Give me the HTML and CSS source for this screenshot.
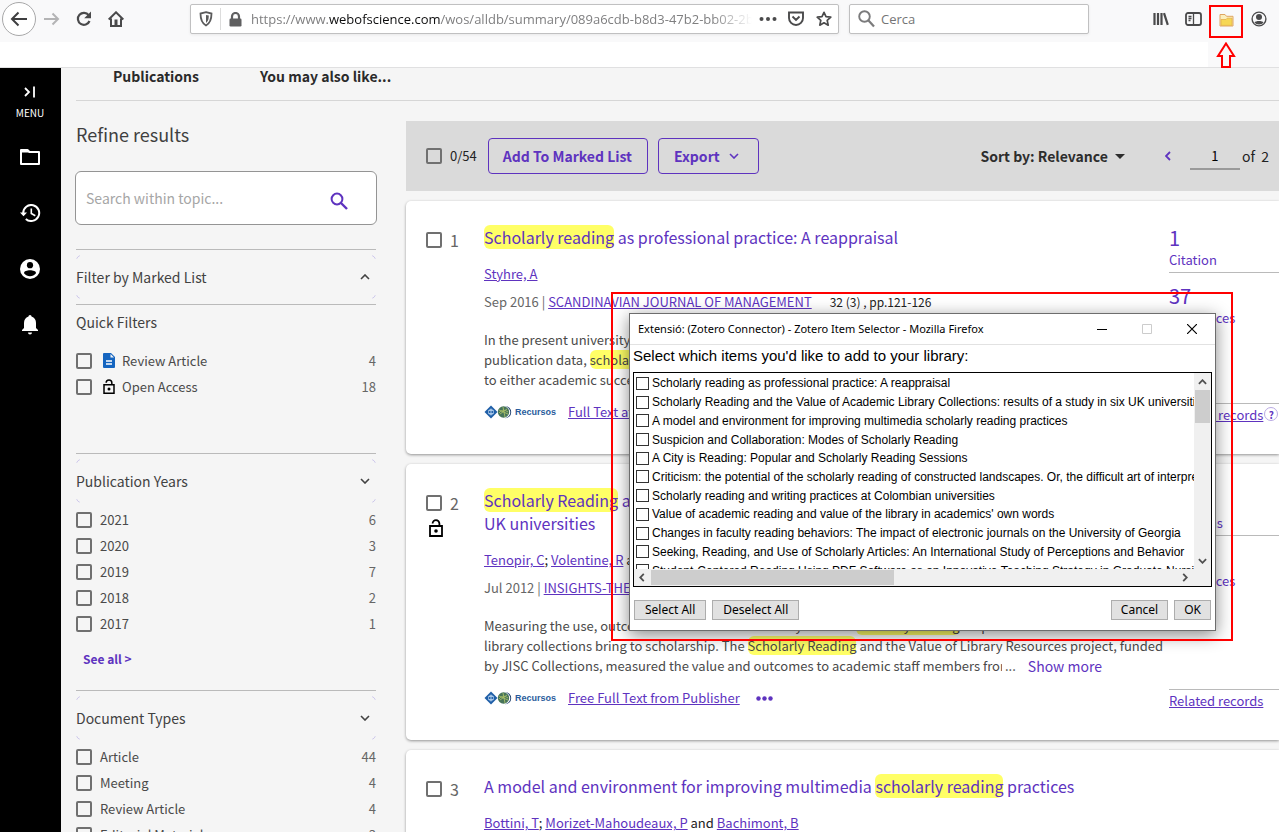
FILE: index.html
```html
<!DOCTYPE html>
<html lang="en">
<head>
<meta charset="utf-8">
<title>Web of Science</title>
<link rel="stylesheet" href="styles.css">
</head>
<body>
<svg class="defs" aria-hidden="true">
  <symbol id="chev-down" viewBox="0 0 10 6"><path d="M1 1l4 4 4-4" fill="none" stroke="currentColor" stroke-width="1.6"/></symbol>
  <symbol id="chev-up" viewBox="0 0 10 6"><path d="M1 5l4-4 4 4" fill="none" stroke="currentColor" stroke-width="1.6"/></symbol>
  <symbol id="unlock" viewBox="0 0 14 18"><path d="M1 7h12v10H1zM3.6 4.500a3.400 3.400 0 0 1 6.800 0V7" fill="none" stroke="currentColor" stroke-width="1.8"/><circle cx="7" cy="12" r="1.8" fill="currentColor"/></symbol>
  <symbol id="recursos" viewBox="0 0 28 14"><path d="M7 .5L13.500 7 7 13.500.5 7z" fill="#1f5fa8"/><path d="M7 3.500v7M4.500 5.500h5M4.500 8.500h5" stroke="#a9c8e8" fill="none"/><circle cx="7" cy="7" r="2.600" stroke="#a9c8e8" fill="none" stroke-width=".8"/><path d="M21 1a6.200 6.200 0 0 1 0 12.400c7-2.400 7-10 0-12.400z" fill="#1d3f6e"/><circle cx="19.500" cy="7" r="5.700" fill="#47745a"/><path d="M15 5l9 4M16 9l7-5M19 2l2 10M15 8c3-4 6-3 9-1" stroke="#a9bf68" fill="none" stroke-width=".9"/></symbol>
</svg>

<header class="chrome">
  <div class="toolbar">
    <button class="icon-btn back" aria-label="Back"><svg width="18" height="16" viewBox="0 0 18 16"><path d="M17 8H2M8.500 1.500L2 8l6.500 6.500" fill="none" stroke="#3f3f40" stroke-width="2"/></svg></button>
    <button class="icon-btn" aria-label="Forward"><svg width="16" height="14" viewBox="0 0 16 14"><path d="M0 7h14M8.500 1.500L14 7l-5.500 5.500" fill="none" stroke="#b4b4b5" stroke-width="2"/></svg></button>
    <button class="icon-btn" aria-label="Reload"><svg width="16" height="16" viewBox="0 0 16 16"><path d="M12.700 4.200A6 6 0 1 0 13.500 10" fill="none" stroke="#4a4a4b" stroke-width="2.200"/><path d="M15 .5v6.800H8.200z" fill="#4a4a4b"/></svg></button>
    <button class="icon-btn" aria-label="Home"><svg width="16" height="16" viewBox="0 0 16 16"><path d="M.7 8.500L8 1.300l7.300 7.200M3 7.500v7.500h10V7.500" fill="none" stroke="#4a4a4b" stroke-width="2"/><path d="M6.500 8.500h3V15h-3z" fill="#4a4a4b"/></svg></button>
    <div class="url-box">
      <svg width="14" height="16" viewBox="0 0 14 16"><path d="M7 1.200l5.500 1.300c0 6-1 9.500-5.500 12C2.500 12 1.500 8.500 1.500 2.500z" fill="none" stroke="#5b5b5c" stroke-width="1.800"/><path d="M7 4l2.800.6c0 3.600-.7 5.600-2.800 7.400z" fill="#5b5b5c"/></svg>
      <span class="url-sep"></span>
      <svg width="13" height="15" viewBox="0 0 13 15"><rect x=".5" y="6.500" width="12" height="8" rx="1.200" fill="#5f5f60"/><path d="M3 7V4.500a3.500 3.500 0 0 1 7 0V7" fill="none" stroke="#5f5f60" stroke-width="2.200"/></svg>
      <div class="url" role="textbox" aria-label="Address">https://www.<b>webofscience.com</b>/wos/alldb/summary/089a6cdb-b8d3-47b2-bb02-2b</div>
      <svg class="dots" width="18" height="4" viewBox="0 0 18 4"><g fill="#4a4a4b"><circle cx="2.500" cy="2" r="2"/><circle cx="9" cy="2" r="2"/><circle cx="15.500" cy="2" r="2"/></g></svg>
      <svg width="16" height="16" viewBox="0 0 16 16"><path d="M1 1.500h14V7a7 7 0 0 1-14 0zM4.500 5.500L8 9l3.500-3.500" fill="none" stroke="#4a4a4b" stroke-width="1.900"/></svg>
      <svg width="16" height="16" viewBox="0 0 16 16"><path d="M8 1.300l2 4.400 4.800.5-3.600 3.200 1 4.800L8 11.800l-4.200 2.400 1-4.800L1.200 6.200 6 5.700z" fill="none" stroke="#4a4a4b" stroke-width="1.700" stroke-linejoin="round"/></svg>
    </div>
    <label class="search-box">
      <svg width="17" height="18" viewBox="0 0 17 18"><circle cx="6.500" cy="6.500" r="5.300" fill="none" stroke="#7b7b7c" stroke-width="1.900"/><path d="M10.500 10.500l5.500 6" stroke="#7b7b7c" stroke-width="2.200"/></svg>
      <input type="text" placeholder="Cerca" aria-label="Cerca">
    </label>
    <div class="tools">
      <button class="icon-btn" aria-label="Library"><svg width="16" height="14" viewBox="0 0 16 14"><path d="M1.500 1v12M5 1v12M8.500 1v12M11 1.200l3.800 11.600" stroke="#4a4a4b" stroke-width="2.200" fill="none"/></svg></button>
      <button class="icon-btn" aria-label="Sidebars"><svg width="17" height="14" viewBox="0 0 17 14"><rect x="1" y="1" width="15" height="12" rx="2" fill="none" stroke="#4a4a4b" stroke-width="1.800"/><path d="M8.500 1v12M3.500 4.500h3M3.500 6.500h3M3.500 8.500h2" stroke="#4a4a4b" stroke-width="1.300"/></svg></button>
      <button class="icon-btn marked" aria-label="Save to Zotero"><svg width="15" height="14" viewBox="0 0 15 14"><path d="M1 13V1.500h5l1.500 1.800H14V13z" fill="#fbefbd" stroke="#dfa562"/><path d="M2 6.500h5l1.200-1.300H13v7.200H2z" fill="#f6d755" stroke="#e5b04e" stroke-width=".8"/></svg></button>
      <button class="icon-btn" aria-label="Account"><svg width="16" height="16" viewBox="0 0 16 16"><circle cx="8" cy="8" r="6.900" fill="none" stroke="#4a4a4b" stroke-width="1.400"/><circle cx="8" cy="6" r="3" fill="#4a4a4b"/><path d="M3.500 11.500c1-2 8-2 9 0-1.500 2.500-7.500 2.500-9 0z" fill="#4a4a4b"/></svg></button>
    </div>
  </div>
  <div class="strip"></div>
</header>

<div class="app">
  <nav class="rail">
    <button class="rail-menu"><svg width="12" height="12" viewBox="0 0 12 12"><path d="M1 2l4 4-4 4M10 .5v11" fill="none" stroke="#fff" stroke-width="1.800"/></svg>MENU</button>
    <button aria-label="Folders"><svg width="20" height="16" viewBox="0 0 20 16"><path d="M1 15V1h6.500l2 2H19v12z" fill="none" stroke="#fff" stroke-width="2" stroke-linejoin="round"/><path d="M1 1h6.500l2 2.500H1z" fill="#fff"/></svg></button>
    <button aria-label="History"><svg width="21" height="18" viewBox="0 0 21 18"><path d="M3.200 9a8 8 0 1 1 2.600 5.900" fill="none" stroke="#fff" stroke-width="2"/><path d="M0 8.500h7L3.500 12.200z" fill="#fff"/><path d="M11.300 4.500v5l4 2.300" fill="none" stroke="#fff" stroke-width="1.600"/></svg></button>
    <button aria-label="Profile"><svg width="20" height="20" viewBox="0 0 20 20"><circle cx="10" cy="10" r="10" fill="#fff"/><circle cx="10" cy="6.200" r="3.100"/><path d="M4 14.200c0-3.800 12-3.800 12 0-3 4-9 4-12 0z"/></svg></button>
    <button aria-label="Alerts"><svg width="16" height="20" viewBox="0 0 16 20"><path d="M8 0c1 0 1.500.8 1.500 1.600C12.500 2.500 14 5 14 8v5l2 2v1H0v-1l2-2V8c0-3 1.500-5.500 4.500-6.400C6.500.8 7 0 8 0zM6 17.500h4a2 2 0 0 1-4 0z" fill="#fff"/></svg></button>
  </nav>

  <div class="page">
    <div class="tabs"><a>Publications</a><a>You may also like...</a></div>
    <div class="columns">
      <aside class="refine">
        <h2>Refine results</h2>
        <div class="refine-search"><input type="text" placeholder="Search within topic..." aria-label="Search within topic"><button aria-label="Search"><svg width="18" height="18" viewBox="0 0 18 18"><circle cx="7" cy="7" r="5.400" fill="none" stroke="#5e33bf" stroke-width="2"/><path d="M11 11l6 6" stroke="#5e33bf" stroke-width="2.400"/></svg></button></div>
        <button class="fold">Filter by Marked List<svg width="10" height="6"><use href="#chev-up"/></svg></button>
        <section class="quick">
          <h3>Quick Filters</h3>
          <label class="row"><input type="checkbox"><svg class="doc" width="12" height="15" viewBox="0 0 12 15"><path d="M1 0h7l4 4v10a1 1 0 0 1-1 1H1a1 1 0 0 1-1-1V1a1 1 0 0 1 1-1z" fill="#1565c0"/><path d="M7.500 1v3.500H11" fill="#f5f5f5"/><path d="M3 8h6M3 11h6" stroke="#fff" stroke-width="1.300"/></svg><span>Review Article</span><em>4</em></label>
          <label class="row"><input type="checkbox"><svg class="doc" width="12" height="15" color="#000"><use href="#unlock"/></svg><span>Open Access</span><em>18</em></label>
        </section>
        <button class="fold">Publication Years<svg width="10" height="6"><use href="#chev-down"/></svg></button>
        <section class="years">
          <label class="row"><input type="checkbox"><span>2021</span><em>6</em></label>
          <label class="row"><input type="checkbox"><span>2020</span><em>3</em></label>
          <label class="row"><input type="checkbox"><span>2019</span><em>7</em></label>
          <label class="row"><input type="checkbox"><span>2018</span><em>2</em></label>
          <label class="row"><input type="checkbox"><span>2017</span><em>1</em></label>
          <button class="see-all">See all &gt;</button>
        </section>
        <button class="fold">Document Types<svg width="10" height="6"><use href="#chev-down"/></svg></button>
        <section class="types">
          <label class="row"><input type="checkbox"><span>Article</span><em>44</em></label>
          <label class="row"><input type="checkbox"><span>Meeting</span><em>4</em></label>
          <label class="row"><input type="checkbox"><span>Review Article</span><em>4</em></label>
          <label class="row"><input type="checkbox"><span>Editorial Material</span><em>3</em></label>
        </section>
      </aside>

      <main class="results">
        <div class="actions">
          <label class="pick"><input type="checkbox">0/54</label>
          <button class="outline">Add To Marked List</button>
          <button class="outline export">Export<svg width="10" height="6"><use href="#chev-down"/></svg></button>
          <button class="sort">Sort by: Relevance<svg width="10" height="5" viewBox="0 0 10 5"><path d="M0 0h10L5 5z" fill="#2d2d2d"/></svg></button>
          <button class="prev" aria-label="Previous page"><svg width="6" height="10" viewBox="0 0 6 10"><path d="M5 1L1 5l4 4" fill="none" stroke="#5e33bf" stroke-width="1.800"/></svg></button>
          <input class="page-no" type="text" value="1" aria-label="Page"><span class="of">of&nbsp; 2</span>
        </div>

        <article class="card">
          <div class="num"><label><input type="checkbox">1</label></div>
          <div class="body">
            <h4><a href="#"><mark>Scholarly reading</mark> as professional practice: A reappraisal</a></h4>
            <p class="authors"><a href="#">Styhre, A</a></p>
            <p class="source">Sep 2016 | <a href="#">SCANDINAVIAN JOURNAL OF MANAGEMENT</a><span class="issue">32 (3) , pp.121-126</span></p>
            <p class="abstract"><span>In the present university g</span><span>publication data, <mark>scholarly</mark></span><span>to either academic success</span></p>
            <div class="links"><svg width="28" height="14"><use href="#recursos"/></svg><b>Recursos</b><a href="#">Full Text at</a></div>
          </div>
          <div class="stats">
            <div class="stat"><strong>1</strong><span>Citation</span></div>
            <div class="stat last"><strong>37</strong><span>References</span></div>
            <div class="related"><a href="#">Related records</a><button class="help" aria-label="Help">?</button></div>
          </div>
        </article>

        <article class="card">
          <div class="num"><label><input type="checkbox">2</label><svg class="oa" width="14" height="18"><use href="#unlock"/></svg></div>
          <div class="body">
            <h4><a href="#"><mark>Scholarly Reading</mark> a<br>UK universities</a></h4>
            <p class="authors"><a href="#">Tenopir, C</a>; <a href="#">Volentine, R</a> and</p>
            <p class="source">Jul 2012 | <a href="#">INSIGHTS-THE UKSG</a></p>
            <p class="abstract"><span>Measuring the use, outcomes and value of the library's role in <mark>scholarly reading</mark> helps demonstrate the value</span><span>library collections bring to scholarship. The <mark>Scholarly Reading</mark> and the Value of Library Resources project, funded</span><span class="tail"><span class="cut">by JISC Collections, measured the value and outcomes to academic staff members from</span>...<a href="#">Show more</a></span></p>
            <div class="links"><svg width="28" height="14"><use href="#recursos"/></svg><b>Recursos</b><a href="#">Free Full Text from Publisher</a><button class="more" aria-label="More"><svg width="17" height="5" viewBox="0 0 17 5"><g fill="#5e33bf"><circle cx="2.500" cy="2.500" r="2.200"/><circle cx="8.500" cy="2.500" r="2.200"/><circle cx="14.500" cy="2.500" r="2.200"/></g></svg></button></div>
          </div>
          <div class="stats">
            <div class="stat"><strong></strong><span>Citations</span></div>
            <div class="stat last"><strong></strong><span>References</span></div>
            <div class="related"><a href="#">Related records</a></div>
          </div>
        </article>

        <article class="card">
          <div class="num"><label><input type="checkbox">3</label></div>
          <div class="body">
            <h4><a href="#">A model and environment for improving multimedia <mark>scholarly reading</mark> practices</a></h4>
            <p class="authors"><a href="#">Bottini, T</a>; <a href="#">Morizet-Mahoudeaux, P</a> and <a href="#">Bachimont, B</a></p>
          </div>
        </article>
      </main>
    </div>
  </div>
</div>

<div class="dialog" role="dialog" aria-label="Zotero Item Selector">
  <div class="dialog-title"><span>Extensió: (Zotero Connector) - Zotero Item Selector - Mozilla Firefox</span>
    <button aria-label="Minimize"><svg width="10" height="10" viewBox="0 0 10 10"><path d="M0 5.500h10" stroke="#000"/></svg></button>
    <button aria-label="Maximize"><svg width="10" height="10" viewBox="0 0 10 10"><path d="M.5.5h9v9h-9z" fill="none" stroke="#ccc"/></svg></button>
    <button aria-label="Close"><svg width="10" height="10" viewBox="0 0 10 10"><path d="M0 0l10 10M10 0L0 10" stroke="#000" stroke-width="1.200"/></svg></button>
  </div>
  <p class="dialog-lead">Select which items you'd like to add to your library:</p>
  <div class="list">
    <div class="list-view"><div class="items">
      <label><input type="checkbox">Scholarly reading as professional practice: A reappraisal</label>
      <label><input type="checkbox">Scholarly Reading and the Value of Academic Library Collections: results of a study in six UK universities</label>
      <label><input type="checkbox">A model and environment for improving multimedia scholarly reading practices</label>
      <label><input type="checkbox">Suspicion and Collaboration: Modes of Scholarly Reading</label>
      <label><input type="checkbox">A City is Reading: Popular and Scholarly Reading Sessions</label>
      <label><input type="checkbox">Criticism: the potential of the scholarly reading of constructed landscapes. Or, the difficult art of interpretation</label>
      <label><input type="checkbox">Scholarly reading and writing practices at Colombian universities</label>
      <label><input type="checkbox">Value of academic reading and value of the library in academics' own words</label>
      <label><input type="checkbox">Changes in faculty reading behaviors: The impact of electronic journals on the University of Georgia</label>
      <label><input type="checkbox">Seeking, Reading, and Use of Scholarly Articles: An International Study of Perceptions and Behavior</label>
      <label><input type="checkbox">Student-Centered Reading Using PDF Software as an Innovative Teaching Strategy in Graduate Nursing</label>
    </div></div>
    <div class="vbar"><svg width="9" height="6" viewBox="0 0 10 6"><path d="M1 5l4-4 4 4" fill="none" stroke="#505050" stroke-width="2"/></svg><i></i><svg width="9" height="6" viewBox="0 0 10 6"><path d="M1 1l4 4 4-4" fill="none" stroke="#505050" stroke-width="2"/></svg></div>
    <div class="hbar"><svg width="6" height="9" viewBox="0 0 6 10"><path d="M5 1L1 5l4 4" fill="none" stroke="#505050" stroke-width="2"/></svg><i></i><svg width="6" height="9" viewBox="0 0 6 10"><path d="M1 1l4 4-4 4" fill="none" stroke="#505050" stroke-width="2"/></svg></div>
  </div>
  <div class="dialog-buttons"><button>Select All</button><button>Deselect All</button><button class="push">Cancel</button><button>OK</button></div>
</div>
<div class="frame"></div>
<svg class="arrow" width="20" height="26" viewBox="0 0 20 26"><path d="M10 1.500L18 14h-4v11H6V14H2z" fill="#f9f9f9" stroke="#f00" stroke-width="2"/></svg>
</body>
</html>
```
FILE: styles.css
```css
* { box-sizing: border-box; }
body {
  margin: 0;
  height: 100vh;
  overflow: hidden;
  position: relative;
  display: flex;
  flex-direction: column;
  background: #f5f5f5;
  color: #4a4a4a;
  font: 13px/20px "Noto Sans CJK SC", "Noto Sans", sans-serif;
}
h2, h3, h4, p { margin: 0; font-weight: 400; }
button { margin: 0; padding: 0; border: 0; background: none; font: inherit; color: inherit; }
svg { display: block; flex: none; }
a { color: #5e33bf; }
em { font-style: normal; }
.defs { position: absolute; width: 0; height: 0; }

/* browser chrome */
.toolbar { display: flex; align-items: center; height: 42px; padding: 0 4px 4px 2px; background: #f9f9fa; }
.toolbar .icon-btn { width: 32px; height: 32px; display: grid; place-items: center; }
.toolbar .back { width: 34px; height: 34px; border: 1px solid #a8a8a9; border-radius: 50%; background: #fff; }
.url-box, .search-box {
  display: flex; align-items: center; height: 30px;
  background: #fff; border: 1px solid #c0c0c1; border-radius: 2px; box-shadow: 0 1px 3px #0001;
}
.url-box { flex: 1; margin-left: 58px; padding: 0 6px 0 8px; min-width: 0; }
.url-sep { width: 1px; height: 22px; margin: 0 8px 0 7px; background: #dcdcdc; }
.url {
  flex: 1; min-width: 0; margin-left: 9px; overflow: hidden; white-space: nowrap;
  font: 13px/22px "Open Sans", sans-serif; color: #7f7f80;
  mask-image: linear-gradient(to left, transparent, #000 40px);
}
.url b { font-weight: 400; color: #0c0c0d; }
.dots { margin: 0 11px 0 7px; }
.url-box svg:last-child { margin-left: 12px; }
.search-box { width: 240px; margin-left: 10px; padding: 0 8px; gap: 6px; }
.search-box input { flex: 1; min-width: 0; border: 0; outline: 0; padding: 0; font: 13px/20px "Open Sans", sans-serif; }
.search-box input::placeholder { color: #747475; }
.tools { display: flex; align-items: center; margin-left: 56px; }
.toolbar .marked { border: 2px solid #f00; width: 34px; height: 33px; margin-top: 5px; padding-bottom: 3px; }
.strip { height: 26px; background: linear-gradient(#fff, #fff) no-repeat #f9f9fa; background-size: calc(100% - 71px) 100%; border-bottom: 1px solid #e0e0e1; }
.arrow { position: absolute; right: 43px; top: 42px; }

/* page shell */
.app { flex: 1; min-height: 0; display: flex; overflow: hidden; }
.rail { width: 61px; flex: none; background: #000; color: #fff; display: flex; flex-direction: column; padding: 16px 1px 0 0; }
.rail button { height: 56px; display: grid; place-items: center; }
.rail .rail-menu { height: 45px; font-size: 10px; line-height: 14px; grid-template-rows: 16px 14px; row-gap: 6px; align-content: start; }
.page { flex: 1; min-width: 0; padding-left: 15px; }
.tabs { display: flex; gap: 61px; height: 33px; padding: 0 37px; border-bottom: 1px solid #d6d6d6; }
.tabs a { font-weight: 700; font-size: 14px; line-height: 16px; color: #2a2a2a; }
.columns { display: grid; grid-template-columns: 300px minmax(0, 1fr); column-gap: 30px; padding-top: 20px; }

/* tick boxes */
.page input[type=checkbox] { appearance: none; flex: none; width: 16px; height: 16px; margin: 0; border: 2px solid #707070; border-radius: 2px; }

/* refine pane */
.refine h2 { font-size: 18px; line-height: 26px; color: #3f3f3f; }
.refine h3 { font-size: 14px; line-height: 20px; color: #424242; margin-bottom: 16px; }
.refine-search { display: flex; align-items: center; height: 54px; margin: 24px -1px; padding: 0 28px 0 10px; border: 1px solid #949494; border-radius: 6px; background: #fff; }
.refine-search input { flex: 1; min-width: 0; border: 0; outline: 0; padding: 0; font: inherit; font-size: 14px; }
.refine-search input::placeholder { color: #a6a6a6; }
.refine-search button { margin-top: 6px; }
.fold {
  position: relative; display: flex; align-items: center; justify-content: space-between;
  width: 100%; height: 54px; padding-right: 6px; border-top: 1px solid #bababa;
  font-size: 14px; color: #424242;
}
/* rounded corner hints of the fold header */
.fold::before {
  content: ""; position: absolute; inset: 5px 0 4px; border: 1px solid #c9c3ea; border-radius: 5px;
  --c: linear-gradient(#000, #000);
  mask: var(--c) 0 0 / 4px 4px no-repeat, var(--c) 100% 0 / 4px 4px no-repeat, var(--c) 0 100% / 4px 4px no-repeat, var(--c) 100% 100% / 4px 4px no-repeat;
}
.quick { height: 149px; margin-top: 1px; padding-top: 7px; border-top: 1px solid #bababa; }
.row { display: flex; align-items: center; height: 26px; }
.row span { margin-left: 8px; }
.row em { margin-left: auto; color: #666; }
.row .doc { margin: 0 -1px 2px 11px; }
.years { height: 183px; }
.see-all { margin: 12px 0 0 7px; font-weight: 700; font-size: 12px; color: #5e33bf; }

/* results */
.actions { display: flex; align-items: center; height: 70px; padding: 0 10px 0 20px; background: #dadada; color: #222; }
.pick { display: flex; align-items: center; gap: 8px; margin-right: 11px; }
.outline { height: 36px; padding: 0 15px 0 14px; border: 1px solid #5e33bf; border-radius: 4px; color: #5e33bf; font-weight: 700; font-size: 14px; }
.export { display: flex; align-items: center; gap: 9px; margin-left: 10px; padding: 0 19px 0 15px; }
.sort { display: flex; align-items: center; gap: 7px; margin-left: auto; font-weight: 700; font-size: 14px; color: #2d2d2d; }
.prev { margin: 0 19px 0 40px; }
.page-no { width: 50px; height: 27px; border: 0; border-bottom: 2px solid #9a9a9a; background: none; text-align: center; padding: 0; font: inherit; }
.of { margin-left: 2px; font-size: 14px; }
.card { display: grid; grid-template-columns: 58px minmax(0, 1fr) 110px; margin-top: 10px; padding: 25px 0 0 20px; background: #fff; border-radius: 5px 0 0 5px; box-shadow: 0 1px 3px #0006; }
.num { padding-top: 4px; font-size: 16px; color: #666; }
.num label { display: flex; align-items: center; gap: 8px; }
.oa { margin: 6px 0 0 3px; color: #000; }
.body { padding-bottom: 32px; white-space: nowrap; }
.body h4 { font-size: 16px; line-height: 23px; margin-bottom: 15px; }
.body h4 a { text-decoration: none; }
mark { color: inherit; background: #ffff66; border-radius: 6px; }
.authors { margin-bottom: 8px; color: #222; }
.source { margin-bottom: 18px; color: #666; }
.issue { margin-left: 18px; color: #222; font-size: 12px; }
.abstract { margin-bottom: 12px; }
.abstract > span { display: block; }
.abstract .tail { display: flex; }
.tail .cut { width: 518px; margin-right: 3px; overflow: hidden; }
.tail a { margin-left: 12px; font-size: 14px; text-decoration: none; }
.links { display: flex; align-items: center; }
.links b { margin: 0 12px 0 3px; color: #2a5c9c; font: 700 9px/20px "Liberation Sans", Arial, sans-serif; }
.more { margin-left: 16px; }
.stats { display: flex; flex-direction: column; color: #5e33bf; }
.stat { height: 47px; border-bottom: 1px solid #bababa; }
.stat.last { border: 0; padding-top: 11px; height: 58px; }
.stat strong { display: block; font-weight: 400; font-size: 20px; line-height: 24px; height: 24px; }
.stat span { display: block; }
.related { display: flex; margin-top: auto; height: 51px; padding-top: 1px; border-top: 1px solid #bababa; }
.help { width: 14px; height: 14px; margin: 2px 0 0 1px; border: 1px solid #b9a9e3; border-radius: 50%; font-size: 10px; line-height: 11px; font-weight: 700; }

/* item selector window */
.dialog { position: absolute; left: 629px; top: 313px; width: 587px; background: #fff; border: 1px solid #6d6d6d; box-shadow: 0 4px 16px #0007; color: #000; }
.dialog-title { display: flex; align-items: center; height: 31px; padding: 0 18px 0 8px; border-bottom: 1px solid #e2e2e2; font: 11px/16px "Noto Sans", sans-serif; }
.dialog-title span { flex: 1; }
.dialog-title button { margin-left: 35px; }
.dialog-lead { padding: 1px 3px 6px; font: 15px/20px "Liberation Sans", Arial, sans-serif; }
.list { display: grid; grid-template: 196px 17px / minmax(0, 1fr) 17px; margin: 0 3px; border: 1px solid #000; }
.list-view { overflow: hidden; }
.items { display: grid; grid-template-rows: repeat(11, 1fr); height: 206px; margin-top: 1px; }
.items label { display: flex; align-items: center; gap: 3px; padding-left: 2px; white-space: nowrap; font: 12px/14px "Liberation Sans", Arial, sans-serif; }
.items input { appearance: none; flex: none; width: 13px; height: 13px; margin: 0; border: 1px solid #333; background: #fff; }
.vbar { grid-row: 1 / 3; grid-column: 2; display: flex; flex-direction: column; align-items: center; padding: 6px 0 22px; background: #f0f0f0; }
.vbar i { width: 15px; height: 33px; margin: 5px 0 auto; background: #cdcdcd; }
.hbar { display: flex; align-items: center; padding: 0 6px 0 5px; background: #f0f0f0; }
.hbar i { width: 243px; height: 15px; margin: 0 auto 0 6px; background: #cdcdcd; }
.dialog-buttons { display: flex; gap: 6px; padding: 13px 4px 10px; }
.dialog-buttons button { height: 20px; padding: 0 10px; border: 1px solid #adadad; background: #e1e1e1; font: 12px/18px "Noto Sans", sans-serif; }
.dialog-buttons .push { margin-left: auto; }
.dialog-buttons .push, .dialog-buttons .push + button { padding: 0 9px; }
.frame { position: absolute; left: 611px; top: 292px; width: 622px; height: 349px; border: 2px solid #f00; pointer-events: none; }
```
